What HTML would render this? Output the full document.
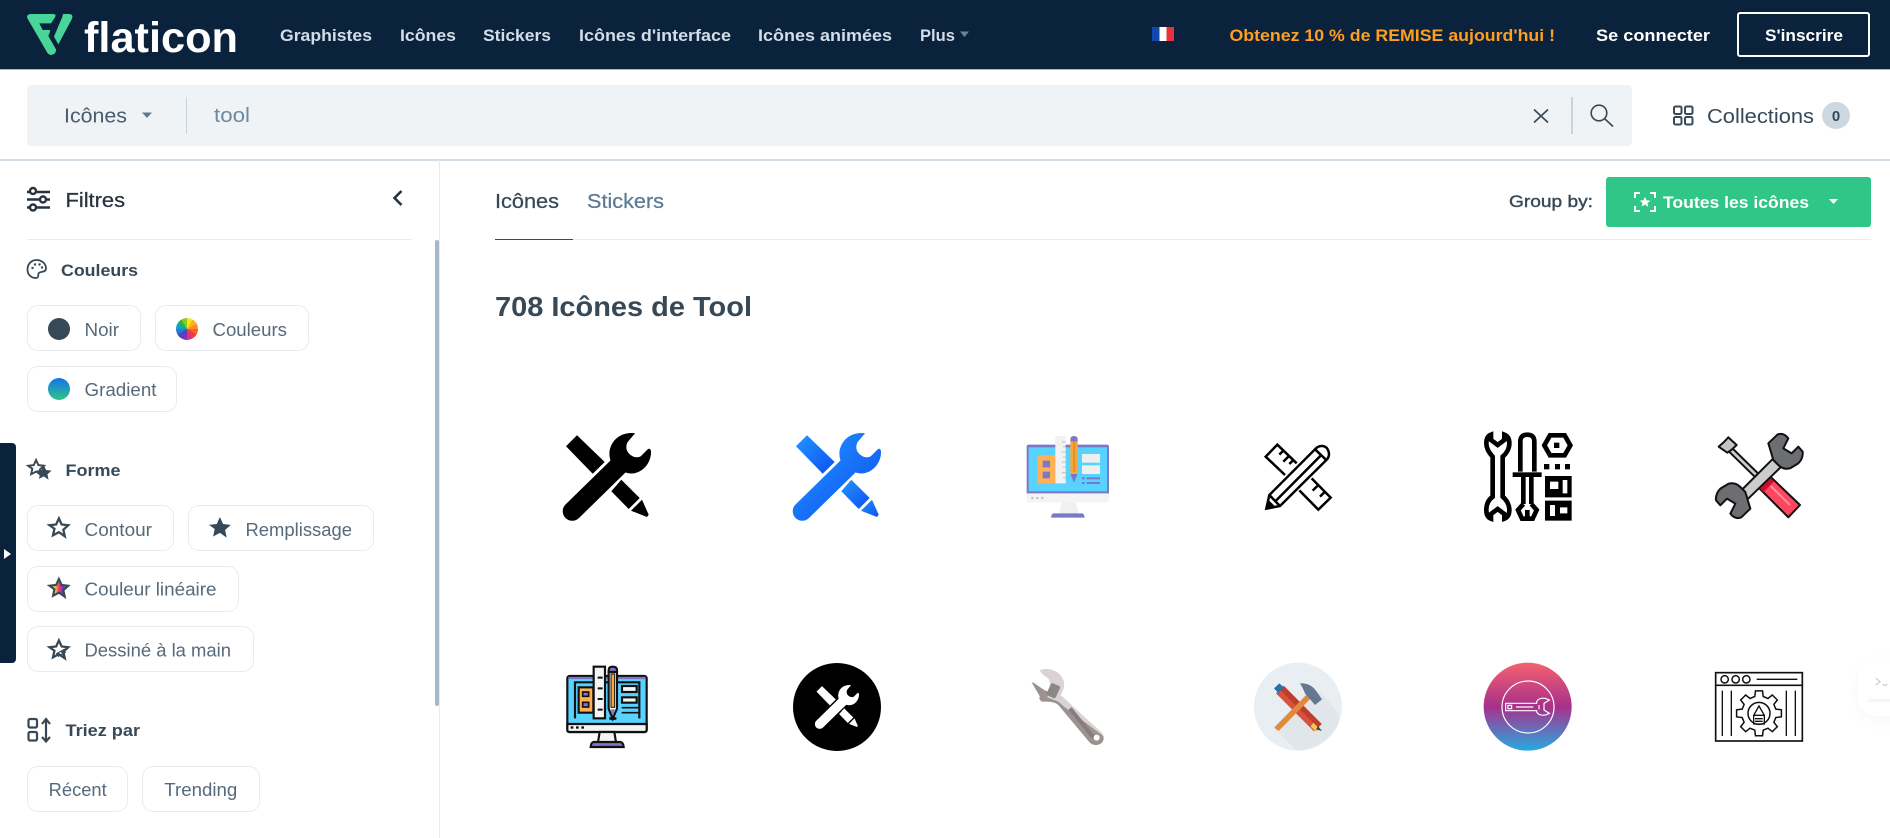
<!DOCTYPE html>
<html lang="fr"><head><meta charset="utf-8"><title>Flaticon</title>
<style>
html,body{margin:0;padding:0;background:#fff}
body{width:1890px;height:838px;position:relative;overflow:hidden;font-family:"Liberation Sans",sans-serif}
.a{position:absolute;box-sizing:border-box}
.pill{position:absolute;box-sizing:border-box;border:1.5px solid #e7ecf0;border-radius:11px;background:#fff}
.dot{position:absolute;width:22px;height:22px;border-radius:50%}
svg.o{position:absolute;left:0;top:0;overflow:visible}
svg svg{overflow:visible}
text{font-family:"Liberation Sans",sans-serif}
.n{font-size:17px;font-weight:700;fill:#d3dde8}
.p{font-size:18px;fill:#566a7b}
.h{font-size:17px;font-weight:700;fill:#374957}
</style></head><body>
<header class="a" style="left:0;top:0;width:1890px;height:70px;background:#0b223c;border-bottom:1.5px solid #a7b6c6"></header>
<div class="a" style="left:1737px;top:12px;width:133px;height:45px;border:2.5px solid #fff;border-radius:3px"></div>
<div class="a" style="left:1152px;top:27px;width:22px;height:14px;background:linear-gradient(90deg,#0f47af 0 33%,#fff 33% 66%,#e8303e 66%)"></div>
<div class="a" style="left:27px;top:85px;width:1605px;height:61px;background:#eff3f6;border-radius:4px"></div>
<div class="a" style="left:186px;top:97px;width:1px;height:37px;background:#c9d3dc"></div>
<div class="a" style="left:1571px;top:97px;width:1.5px;height:37px;background:#c9d3dc"></div>
<div class="a" style="left:1822px;top:102px;width:28px;height:27px;border-radius:50%;background:#cdd7e0"></div>
<div class="a" style="left:0;top:159px;width:1890px;height:1.5px;background:#d5dde6"></div>
<div class="a" style="left:439px;top:160px;width:1px;height:678px;background:#e7ecf0"></div>
<div class="a" style="left:435px;top:240px;width:4px;height:466px;background:#a6b8c9;border-radius:2px"></div>
<div class="a" style="left:27px;top:239px;width:385px;height:1px;background:#e7ecf0"></div>
<div class="a" style="left:0;top:443px;width:16px;height:220px;background:#0b223c;border-radius:0 4px 4px 0"></div>
<div class="a" style="left:495px;top:239px;width:1376px;height:1px;background:#e7ecf0"></div>
<div class="a" style="left:495px;top:238.5px;width:78px;height:1.5px;background:#3a4b5c"></div>
<div class="a" style="left:1606px;top:177px;width:265px;height:50px;background:#2fc687;border-radius:3px"></div>

<div class="pill" style="left:27px;top:305px;width:114px;height:46px"></div>
<div class="pill" style="left:155px;top:305px;width:154px;height:46px"></div>
<div class="pill" style="left:27px;top:366px;width:150px;height:45.5px"></div>
<div class="pill" style="left:27px;top:505px;width:146.5px;height:46px"></div>
<div class="pill" style="left:187.5px;top:505px;width:186px;height:46px"></div>
<div class="pill" style="left:27px;top:566px;width:211.5px;height:45.5px"></div>
<div class="pill" style="left:27px;top:626px;width:226.5px;height:46px"></div>
<div class="pill" style="left:27px;top:766px;width:100.5px;height:45.5px"></div>
<div class="pill" style="left:142px;top:766px;width:117.5px;height:45.5px"></div>
<div class="dot" style="left:48px;top:318px;background:#374957"></div>
<div class="dot" style="left:176px;top:318px;background:conic-gradient(#ffe11a 0 30deg,#ffb21a 30deg 60deg,#ff8a2a 60deg 90deg,#ff5a2a 90deg 120deg,#ef3d3d 120deg 150deg,#d6357f 150deg 180deg,#7a35b5 180deg 210deg,#4a45c5 210deg 240deg,#1f7fd0 240deg 270deg,#12a0c8 270deg 300deg,#2fb04a 300deg 330deg,#8bcc1f 330deg 360deg)"></div>
<div class="dot" style="left:48px;top:378px;background:linear-gradient(#1273eb,#2fc687)"></div>

<div class="a" style="left:1857px;top:660px;width:60px;height:56px;border-radius:20px;background:#fff;box-shadow:0 4px 14px rgba(120,120,140,.05)"></div>
<div class="a" style="left:1868px;top:699px;width:22px;height:3px;background:#fdf3f6"></div>

<svg class="o" width="1890" height="838" viewBox="0 0 1890 838" xmlns="http://www.w3.org/2000/svg">
<defs>
<linearGradient id="bg" x1="0" y1="0" x2="1" y2="1"><stop offset="0" stop-color="#2196ff"/><stop offset="1" stop-color="#0f4ff0"/></linearGradient>
<linearGradient id="rb" x1="0" y1="0" x2="1" y2="0"><stop offset="0" stop-color="#2fc687"/><stop offset=".3" stop-color="#ffd21a"/><stop offset=".5" stop-color="#ef3d6d"/><stop offset=".7" stop-color="#7a35b5"/><stop offset="1" stop-color="#12a0c8"/></linearGradient>
<linearGradient id="pg" x1="0" y1="0" x2="0" y2="1"><stop offset="0" stop-color="#f4626f"/><stop offset=".5" stop-color="#a8308b"/><stop offset="1" stop-color="#27aae1"/></linearGradient>
<symbol id="wp" viewBox="0 0 88 88" overflow="visible">
<path d="M71 1.5L64.7 9C62 14 63 20 70 23.5C74 25 77 24 78 23L84.5 16.5C86 15 88 16 88 18.5C88.5 32 76 44 62.5 39.5L16 85A9.5 9.5 0 0 1 2.5 71.5L47.5 27.5C43 14 53-1 70 0C72 0 72.5 1 71 1.5Z"/>
<path d="M14 2.3L3 13.3L29.7 40.7L41.7 29Z" stroke-linejoin="round"/><path d="M58.3 46.7L48.3 58.3L65.7 76L76.7 65Z"/><path d="M79 66.7L68 77.7L84 84L85.7 81.7Z"/>
</symbol>
<path id="st" d="M12 2.5l2.9 6.4 7 .8-5.2 4.7 1.5 6.9L12 17l-6.2 3.3 1.5-6.9L2.1 9.7l7-.8z"/>
</defs>

<!-- logo -->
<g transform="scale(.3333)" fill="#48d597">
<path d="M92 42H160Q170 42 165 52L153 70H118L128 90H147Q152 90 150 95L145 108L168 148Q170 160 155 165Q144 165 140 155L84 58Q76 44 92 42Z"/>
<path d="M190 42H208Q222 44 215 58L175 133L162 110L188 48Q188 42 190 42Z"/>
</g>
<text x="84" y="52" font-size="43" font-weight="700" fill="#fff" textLength="154" lengthAdjust="spacingAndGlyphs">flaticon</text>

<!-- nav -->
<text class="n" x="280" y="41" textLength="92" lengthAdjust="spacingAndGlyphs">Graphistes</text>
<text class="n" x="400" y="41" textLength="56" lengthAdjust="spacingAndGlyphs">Icônes</text>
<text class="n" x="483" y="41" textLength="68" lengthAdjust="spacingAndGlyphs">Stickers</text>
<text class="n" x="579" y="41" textLength="152" lengthAdjust="spacingAndGlyphs">Icônes d'interface</text>
<text class="n" x="758" y="41" textLength="134" lengthAdjust="spacingAndGlyphs">Icônes animées</text>
<text class="n" x="920" y="41" textLength="35" lengthAdjust="spacingAndGlyphs">Plus</text>
<path d="M960 31.5H969L964.5 37Z" fill="#6d8299"/>
<text class="n" style="fill:#ff9e20" x="1229.5" y="41" textLength="325.5" lengthAdjust="spacingAndGlyphs">Obtenez 10 % de REMISE aujourd'hui !</text>
<text class="n" style="fill:#fff" x="1596" y="41" textLength="114" lengthAdjust="spacingAndGlyphs">Se connecter</text>
<text class="n" style="fill:#fff" x="1765" y="41" textLength="78" lengthAdjust="spacingAndGlyphs">S'inscrire</text>

<!-- search -->
<text x="64" y="122.5" font-size="20" fill="#4a5c6c" textLength="63" lengthAdjust="spacingAndGlyphs">Icônes</text>
<path d="M142 112.5H152L147 118Z" fill="#5d7a94"/>
<text x="214" y="122" font-size="20" fill="#6e8aa3" textLength="36" lengthAdjust="spacingAndGlyphs">tool</text>
<path d="M1534 109.5L1548 122.5M1548 109.5L1534 122.5" stroke="#374957" stroke-width="1.7" fill="none"/>
<g fill="none" stroke="#374957" stroke-width="1.6"><circle cx="1599" cy="113" r="7.8"/><path d="M1605 119L1613 126.5"/></g>
<g fill="none" stroke="#374957" stroke-width="2"><rect x="1674" y="106.5" width="7.5" height="7.5" rx="1.5"/><rect x="1685" y="106.5" width="7.5" height="7.5" rx="1.5"/><rect x="1674" y="117" width="7.5" height="7.5" rx="1.5"/><rect x="1685" y="117" width="7.5" height="7.5" rx="1.5"/></g>
<text x="1707" y="123" font-size="20" fill="#374957" textLength="107" lengthAdjust="spacingAndGlyphs">Collections</text>
<text x="1836" y="121" font-size="15" font-weight="700" fill="#374957" text-anchor="middle">0</text>

<!-- filters -->
<g fill="#fff" stroke="#27333e" stroke-width="2.4"><path d="M27 192H50M27 199.5H50M27 207.5H50"/><circle cx="33" cy="191" r="3"/><circle cx="43" cy="199.5" r="3"/><circle cx="33" cy="207.5" r="3"/></g>
<text x="65.5" y="207" font-size="20" fill="#27333e" stroke="#27333e" stroke-width=".25" textLength="59.5" lengthAdjust="spacingAndGlyphs">Filtres</text>
<path d="M401.5 191L394.5 198L401.5 205" fill="none" stroke="#27333e" stroke-width="2.6"/>
<path d="M46 268.5C46 263 41 260 36.5 260C31 260 27.5 264.5 27.5 269.5C27.5 274.5 31 278 36 278C39 278 38 275 38.5 273.5C39.5 271 46 273 46 268.5Z" fill="none" stroke="#374957" stroke-width="1.8"/>
<g fill="#374957"><circle cx="32.5" cy="268" r="1.2"/><circle cx="35" cy="264.5" r="1.2"/><circle cx="39.5" cy="264.5" r="1.2"/><circle cx="42" cy="267.5" r="1.2"/></g>
<text class="h" x="61" y="276" textLength="77" lengthAdjust="spacingAndGlyphs">Couleurs</text>
<text class="p" x="84.5" y="336" textLength="34.5" lengthAdjust="spacingAndGlyphs">Noir</text>
<text class="p" x="212.5" y="336" textLength="74.5" lengthAdjust="spacingAndGlyphs">Couleurs</text>
<text class="p" x="84.5" y="396" textLength="72" lengthAdjust="spacingAndGlyphs">Gradient</text>

<use href="#st" transform="translate(26.5,458) scale(.8)" fill="#fff" stroke="#374957" stroke-width="2.4"/>
<use href="#st" transform="translate(34.4,463.1) scale(.78)" fill="#374957"/>
<text class="h" x="65.5" y="476" textLength="55" lengthAdjust="spacingAndGlyphs">Forme</text>
<path d="M4 549L11 554L4 559Z" fill="#fff"/>
<use href="#st" transform="translate(47.5,516) scale(.95)" fill="none" stroke="#374957" stroke-width="2.4"/>
<text class="p" x="84.5" y="536" textLength="67.5" lengthAdjust="spacingAndGlyphs">Contour</text>
<use href="#st" transform="translate(206.7,514.2) scale(1.1)" fill="#374957"/>
<text class="p" x="245.5" y="536" textLength="106.5" lengthAdjust="spacingAndGlyphs">Remplissage</text>
<use href="#st" transform="translate(47.5,576.5) scale(.95)" fill="url(#rb)" stroke="#374957" stroke-width="2.2"/>
<text class="p" x="84.5" y="595.5" textLength="132" lengthAdjust="spacingAndGlyphs">Couleur linéaire</text>
<use href="#st" transform="translate(47.5,638) scale(.95)" fill="none" stroke="#374957" stroke-width="2.4"/>
<path d="M56 654L65 649M58 656.5L66 652M61 651L64 656" stroke="#374957" stroke-width="1.2" fill="none"/>
<text class="p" x="84.5" y="656.5" textLength="146.5" lengthAdjust="spacingAndGlyphs">Dessiné à la main</text>
<g fill="none" stroke="#374957" stroke-width="2.2"><rect x="28.5" y="719" width="8.5" height="8.5" rx="1.5"/><rect x="28.5" y="732" width="8.5" height="8.5" rx="1.5"/><path d="M46 720V741M42 724L46 719L50 724M42 737L46 741.5L50 737"/></g>
<text class="h" x="65.5" y="736" textLength="74.5" lengthAdjust="spacingAndGlyphs">Triez par</text>
<text class="p" x="48.7" y="796" textLength="58" lengthAdjust="spacingAndGlyphs">Récent</text>
<text class="p" x="164.3" y="796" textLength="73" lengthAdjust="spacingAndGlyphs">Trending</text>

<!-- main head -->
<text x="495" y="208" font-size="20" fill="#374957" stroke="#374957" stroke-width=".25" textLength="64" lengthAdjust="spacingAndGlyphs">Icônes</text>
<text x="587" y="208" font-size="20" fill="#5d7a94" stroke="#5d7a94" stroke-width=".25" textLength="77" lengthAdjust="spacingAndGlyphs">Stickers</text>
<text x="1509" y="207" font-size="17" fill="#374957" stroke="#374957" stroke-width=".4" textLength="84" lengthAdjust="spacingAndGlyphs">Group by:</text>
<g fill="none" stroke="#fff" stroke-width="2"><path d="M1640 193H1635V198M1650 193H1655V198M1640 211H1635V206M1650 211H1655V206"/></g>
<use href="#st" transform="translate(1638.5,195.5) scale(.54)" fill="#fff"/>
<text x="1663" y="208" font-size="17" font-weight="700" fill="#fff" textLength="146" lengthAdjust="spacingAndGlyphs">Toutes les icônes</text>
<path d="M1829 199H1838L1833.5 204Z" fill="#fff"/>
<text x="495" y="316" font-size="28" font-weight="700" fill="#374957" textLength="257" lengthAdjust="spacingAndGlyphs">708 Icônes de Tool</text>

<!-- icons row 1 -->
<use href="#wp" x="563" y="433" width="88" height="88" fill="#000"/>
<use href="#wp" x="793" y="433" width="88" height="88" fill="url(#bg)"/>

<svg x="990" y="410" width="400" height="130" viewBox="0 0 1200 390">
<rect x="110" y="104" width="247" height="150" rx="6" fill="#7b78c8"/><rect x="116" y="112" width="235" height="132" fill="#58d3ff"/>
<path d="M110 250H357V270Q357 277 350 277H117Q110 277 110 270Z" fill="#f4f4f4"/>
<g fill="#bbb"><circle cx="127" cy="264" r="3.5"/><circle cx="142" cy="264" r="3.5"/><circle cx="157" cy="264" r="3.5"/></g>
<path d="M215 277H258L265 310H208Z" fill="#f0f0f0"/><path d="M190 310H277Q283 312 284 323H183Q184 312 190 310Z" fill="#7b78c8"/>
<rect x="142" y="136" width="54" height="84" fill="#ffb055"/><rect x="158" y="152" width="22" height="20" fill="#7b78c8"/><rect x="158" y="185" width="22" height="20" fill="#7b78c8"/>
<rect x="196" y="78" width="31" height="142" fill="#f2f2f2"/>
<path d="M215 96H227M219 110H227M215 126H227M219 141H227M215 156H227M219 172H227M215 188H227M219 203H227" stroke="#ccc" stroke-width="4"/>
<path d="M241 95V88Q241 78 252 78Q263 78 263 88V95Z" fill="#7b78c8"/><rect x="241" y="95" width="22" height="97" fill="#f5a93c"/><rect x="249" y="95" width="7" height="90" fill="#e88f2a"/><path d="M241 192H263L252 218Z" fill="#7b78c8"/>
<rect x="276" y="132" width="54" height="26" fill="#efefef"/><rect x="276" y="166" width="54" height="26" fill="#efefef"/>
<g fill="#7b78c8"><rect x="276" y="202" width="8" height="6"/><rect x="290" y="202" width="40" height="6"/><rect x="276" y="216" width="8" height="6"/><rect x="290" y="216" width="40" height="6"/></g>
<g fill="none" stroke="#000" stroke-width="7.5" stroke-linejoin="miter">
<path d="M885 195L827 140L862 104L920 160M880 122L868 134M897 138L880 155M910 150L898 162M965 205L1022 263L985 299L928 241M985 225L968 242M1005 245L990 260"/>
<path d="M829 296L838 255L975 118C988 103 1008 106 1014 120C1020 133 1016 144 1009 150L870 288Z"/>
<path d="M838 255L870 288M975 118L1011 152M858 272L992 137"/>
</g>
<path d="M827 298L834 268L858 292Z" fill="#000"/>
</svg>

<svg x="1490" y="410" width="400" height="130" viewBox="0 0 1200 390">
<g fill="none" stroke="#000" stroke-width="14" stroke-linejoin="miter">
<path d="M8 140C-6 125-11 110-11 100C-11 85-5 77 3 74V90L23 105L43 90V74C51 77 58 85 58 100C58 115 50 130 38 140V260C50 270 58 285 58 300C58 315 51 323 43 326V312L23 297L3 312V326C-5 323-11 315-11 300C-11 285-6 270 8 260Z"/>
<path d="M91 185V95Q91 74 112 74Q133 74 133 95V185M100 201V282M124 201V282M100 282L84 300L96 326H128L140 300L124 282M112 300V326"/>
<path d="M163 106L180 76H224L241 106L224 136H180Z"/>
</g>
<rect x="68" y="187" width="87" height="14"/>
<rect x="192" y="98" width="16" height="16"/>
<rect x="162" y="162" width="16" height="16"/><rect x="195" y="162" width="15" height="16"/><rect x="225" y="162" width="15" height="16"/>
<path d="M165 198H245V262H165ZM180 215V237H205V215ZM218 210V250H232V210Z" fill-rule="evenodd"/>
<path d="M165 272H245V332H165ZM180 285V318H195V285ZM210 292V310H232V292Z" fill-rule="evenodd"/>

<g stroke="#111" stroke-width="6" stroke-linejoin="round">
<path d="M715 103L806 192L796 202L705 113Z" fill="#ccc"/>
<path d="M715 82L740 105L724 120L712 128L686 110L702 96Z" fill="#c4c4c4"/>
<path d="M838 197L930 285L895 322L805 232Z" fill="#ff4560"/>
</g>
<path d="M838 201L852 214L820 247L808 233Z" fill="#c8102e"/>
<path d="M842 228L900 285" stroke="#ff8a9a" stroke-width="6"/>
<g stroke="#111" stroke-width="6" stroke-linejoin="round">
<path d="M855 140L737 258L762 278L881 163Z" fill="#ccc"/>
<path d="M835 100L862 74Q880 66 895 85L880 115L905 130L925 110L938 125Q940 145 925 160L900 175Q880 180 865 165L850 150Z" fill="#6d6e71"/>
<path d="M781 296L754 322Q736 330 721 311L736 281L711 266L691 286L678 271Q676 251 691 236L716 221Q736 216 751 231L766 246Z" fill="#6d6e71"/>
</g>
</svg>

<!-- icons row 2 -->
<svg x="540" y="650" width="400" height="130" viewBox="0 0 1200 390">
<g stroke="#111" stroke-width="6.5">
<rect x="82" y="78" width="238" height="168" rx="7" fill="#58d3ff"/>
<path d="M85 84H317" stroke="#7b78c8" stroke-width="7"/>
<path d="M82 222H320V240Q320 246 314 246H88Q82 246 82 240Z" fill="#f4f4f4"/>
<path d="M105 205V97H298V205" fill="none"/>
<rect x="116" y="112" width="44" height="76" fill="#ffb055"/>
<rect x="128" y="126" width="18" height="13" fill="#7b78c8" stroke-width="5"/><rect x="128" y="157" width="18" height="14" fill="#7b78c8" stroke-width="5"/>
<rect x="161" y="50" width="34" height="155" fill="#f4f4f4"/>
<path d="M208 205L218 208L229 205Z" fill="#000"/>
<path d="M206 66V60Q206 50 218 50Q231 50 231 60V66Z" fill="#7b78c8"/>
<path d="M206 66H231V176L218 206L206 176Z" fill="#fff"/>
<rect x="213" y="72" width="11" height="100" fill="#f5a93c" stroke-width="3"/>
<path d="M212 178H225L218 198Z" fill="#7b78c8" stroke-width="0"/>
<rect x="246" y="108" width="44" height="18" fill="#f4f4f4"/><rect x="246" y="142" width="44" height="16" fill="#f4f4f4"/>
<path d="M245 173H295M245 188H295" fill="none" stroke-width="5"/>
<path d="M179 246L174 277H228L223 246Z" fill="#f4f4f4"/>
<path d="M160 276H242Q250 278 251 291H152Q153 278 160 276Z" fill="#7b78c8"/>
</g>
<g fill="#111"><rect x="92" y="229" width="8" height="7"/><rect x="108" y="229" width="8" height="7"/><rect x="124" y="229" width="8" height="7"/><path d="M165 80H180V86H165ZM165 112H180V118H165ZM165 144H180V150H165ZM165 176H180V182H165Z" transform="translate(8,0)"/></g>
<circle cx="891" cy="171" r="132" fill="#000"/>
<svg x="825" y="105" width="132" height="132" viewBox="0 0 88 88" fill="#fff"><use href="#wp" width="88" height="88"/></svg>
</svg>

<svg x="990" y="650" width="400" height="130" viewBox="0 0 1200 390">
<path d="M150 60C175 52 210 60 222 95C225 115 215 130 212 135L335 248C345 260 342 275 330 282C318 288 305 285 297 275L205 165C195 155 175 155 155 155C150 150 145 145 150 140L125 97L130 96C145 105 160 125 175 125C180 115 182 95 175 85C165 78 152 72 150 60Z" fill="#dad3d3"/>
<path d="M125 97C145 105 165 125 178 125L172 142L205 155L225 172L340 258C343 270 338 278 330 282C318 288 305 285 297 275L205 165C195 155 175 155 155 155C150 150 145 145 150 140Z" fill="#9c9292"/>
<path d="M240 175L310 262" stroke="#877d7d" stroke-width="12"/>
<circle cx="320" cy="263" r="9" fill="#fff"/>
<rect x="-15" y="-20" width="30" height="40" rx="6" transform="translate(190,122) rotate(25)" fill="#888"/>
<circle cx="924" cy="170" r="132" fill="#e9eef3"/>
<path d="M860 240L990 125L1045 190Q1050 210 1040 230Q1000 295 920 302Z" fill="#e1e6eb"/>
<path d="M882 108L995 222L972 244L858 130Z" fill="#d9503c"/><path d="M882 108L995 222L984 233L870 119Z" fill="#bf3d2d"/>
<path d="M868 100L882 112L865 129L852 115Z" fill="#2a6fa8"/>
<path d="M970 218L990 238L978 244L962 230Z" fill="#f4c84a"/><path d="M984 228L996 243L978 238Z" fill="#3a4b5c"/>
<path d="M968 115L980 127L867 242Q858 240 853 232Z" fill="#e08a3c"/>
<path d="M930 100C955 98 972 112 980 125L996 148L975 165L945 130Q938 112 930 100Z" fill="#66788f"/>
</svg>

<svg x="1490" y="650" width="400" height="130" viewBox="0 0 1200 390">
<circle cx="113" cy="170" r="132" fill="url(#pg)"/>
<g fill="none" stroke="#fff" stroke-width="3.5"><circle cx="114" cy="171" r="78"/>
<path d="M47 160H140V155C145 145 160 140 178 150L162 160V180L178 190C160 200 145 195 140 186V182H47Z"/><rect x="54" y="166" width="11" height="10"/><path d="M78 171H130M147 165V178"/></g>
<g fill="none" stroke="#111">
<rect x="677" y="68" width="260" height="205" stroke-width="5"/><path d="M677 106H937" stroke-width="5"/>
<circle cx="704" cy="88" r="11" stroke-width="4.5"/><circle cx="737" cy="88" r="11" stroke-width="4.5"/><circle cx="769" cy="88" r="11" stroke-width="4.5"/>
<path d="M800 88H922M697 122V258M724 122V258M889 122V258M916 122V258" stroke-width="4"/>
<polygon transform="translate(807,190)" stroke-width="4.5" points="44.6,26.8 55,40 40,55 26.8,44.6 12.6,50.5 10.6,67.2 -10.6,67.2 -12.6,50.5 -26.8,44.6 -40,55 -55,40 -44.6,26.8 -50.5,12.6 -67.2,10.6 -67.2,-10.6 -50.5,-12.6 -44.6,-26.8 -55,-40 -40,-55 -26.8,-44.6 -12.6,-50.5 -10.6,-67.2 10.6,-67.2 12.6,-50.5 26.8,-44.6 40,-55 55,-40 44.6,-26.8 50.5,-12.6 67.2,-10.6 67.2,10.6 50.5,12.6"/>
<circle cx="807" cy="190" r="33" stroke-width="4.5"/>
<path d="M807 168L791 196V222H823V196ZM791 196H823M795 206H818M795 214H818" stroke-width="4"/>
</g>
<path d="M1157 84L1170 95L1157 106M1178 102Q1185 110 1192 102" fill="none" stroke="#d0d0d0" stroke-width="4"/>
</svg>
</svg>
</body></html>
